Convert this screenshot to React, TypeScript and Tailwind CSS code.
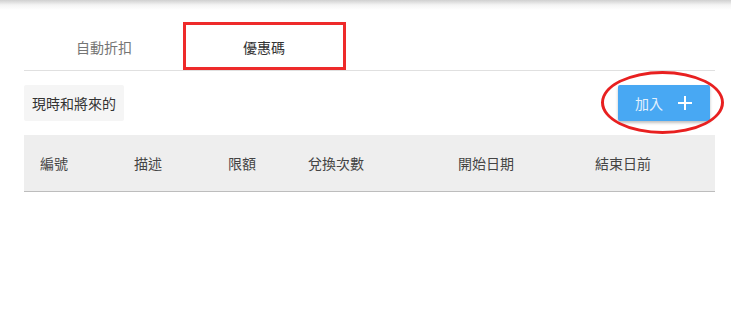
import React from "react";

export default function App() {
  const cols = ["編號", "描述", "限額", "兌換次數", "開始日期", "結束日前"];
  return (
    <div
      className="relative w-[731px] h-[315px] bg-white overflow-hidden"
      style={{ fontFamily: '"Noto Sans CJK TC", "Noto Sans", sans-serif' }}
    >
      <div className="absolute top-0 left-0 right-0 h-[10px] bg-gradient-to-b from-[#d0d0d0] via-[#f4f4f4] to-white" />
      <div className="pt-[24px] pl-[24px] pr-[16px]">
        <div className="flex h-[47px] border-b border-[#e0e0e0]">
          <div className="w-[160px] flex items-center justify-center text-[14px] text-[#757575]">
            自動折扣
          </div>
          <div className="w-[160px] flex items-center justify-center text-[14px] text-[#333]">
            優惠碼
          </div>
        </div>
        <div className="flex justify-between items-center mt-[14px] pr-[5px]">
          <div className="h-[36px] px-[8px] flex items-center bg-[#f5f5f5] rounded-[2px] text-[14px] text-[#333]">
            現時和將來的
          </div>
          <button className="h-[36px] w-[92px] flex items-center justify-center gap-[14px] bg-[#48a8f3] rounded-[2px] shadow-[0_2px_3px_rgba(0,0,0,0.25)] text-[14px] text-[#e3f1fd]">
            <span>加入</span>
            <svg width="16" height="16" viewBox="0 0 16 16">
              <path d="M8 1v14M1 8h14" stroke="white" strokeWidth="2" />
            </svg>
          </button>
        </div>
        <div className="mt-[14px] grid grid-cols-[94px_94px_80px_150px_137px_136px] h-[57px] bg-[#eeeeee] border-b border-[#bdbdbd] items-center text-[14px] text-[#444]">
          {cols.map((c) => (
            <div key={c} className="pl-[16px]">
              {c}
            </div>
          ))}
        </div>
      </div>
      <div className="absolute left-[183px] top-[22px] w-[163px] h-[48px] border-[3px] border-[#ee2a2a]" />
      <div className="absolute left-[601px] top-[71px] w-[123px] h-[63px] rounded-[50%] border-[3px] border-[#e82020]" />
    </div>
  );
}
